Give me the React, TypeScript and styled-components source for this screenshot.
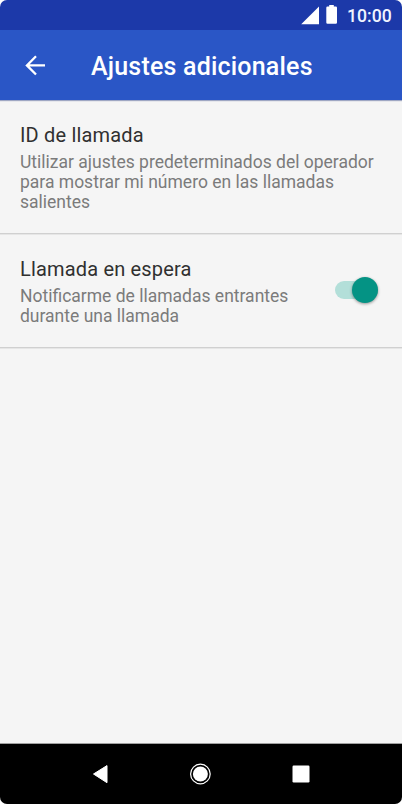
import React from "react";
import styled, { createGlobalStyle } from "styled-components";

const GlobalStyle = createGlobalStyle`
  * { box-sizing: border-box; }
  html, body { margin: 0; padding: 0; background: #fff; }
  body { font-family: Roboto, "Liberation Sans", sans-serif; }
`;

const Screen = styled.div`
  width: 402px;
  height: 804px;
  display: flex;
  flex-direction: column;
  overflow: hidden;
  border-radius: 7px;
  background: #f5f5f5;
`;

const StatusBar = styled.div`
  height: 30px;
  flex: none;
  display: flex;
  justify-content: flex-end;
  background: #1c39a9;
  color: #fff;
`;

const StatusIcons = styled.svg`
  display: block;
  width: 45px;
  height: 30px;
  flex: none;
`;

const Clock = styled.span`
  width: 57px;
  padding-left: 2px;
  font-size: 17.6px;
  font-weight: 500;
  line-height: 32px;
  color: #f0f4ff;
`;

const AppBar = styled.header`
  height: 70px;
  flex: none;
  display: flex;
  align-items: center;
  padding-left: 20px;
  background: #2a56c6;
  box-shadow: 0 1px 1px rgba(30, 50, 120, 0.4);
`;

const BackButton = styled.button`
  width: 30px;
  height: 30px;
  margin: 0 41px 0 0;
  padding: 0;
  border: 0;
  background: none;

  svg { display: block; }
`;

const Title = styled.h1`
  margin: 0;
  padding-top: 4px;
  font-size: 25px;
  letter-spacing: 0.2px;
  font-weight: 500;
  line-height: 30px;
  white-space: nowrap;
  color: #fff;
`;

const Content = styled.main`
  flex: 1;
`;

const Row = styled.section<{ $height: number }>`
  height: ${({ $height }) => $height}px;
  display: flex;
  justify-content: space-between;
  padding: 24px 24px 0 20px;
  border-bottom: 1px solid #d0d0d0;
  box-shadow: 0 1px 0 #e6e6e6;
`;

const RowTitle = styled.h2`
  margin: 0 0 5px;
  font-size: 20px;
  letter-spacing: 0.17px;
  font-weight: 400;
  line-height: 23px;
  color: #303030;
`;

const RowText = styled.p`
  margin: 0;
  font-size: 17.5px;
  line-height: 20px;
  white-space: nowrap;
  color: #7b7b7b;
`;

const Toggle = styled.button`
  width: 43px;
  height: 26px;
  margin: 19px 0 0;
  padding: 4px 0;
  display: flex;
  align-items: center;
  border: 0;
  background: none;
`;

const Track = styled.span`
  width: 43px;
  height: 18px;
  display: flex;
  align-items: center;
  justify-content: flex-end;
  border-radius: 9px;
  background: #b3dfd9;
`;

const Thumb = styled.span`
  width: 26px;
  height: 26px;
  flex: none;
  border-radius: 50%;
  background: #049384;
  box-shadow: 0 1px 3px rgba(0, 0, 0, 0.4);
`;

const NavBar = styled.nav`
  height: 61px;
  flex: none;
  display: flex;
  align-items: center;
  justify-content: center;
  gap: 68px;
  padding-right: 2px;
  border-top: 1px solid #a0a0a0;
  background: #000;

  svg { display: block; }
`;

export default function App() {
  return (
    <>
      <GlobalStyle />
      <Screen>
        <StatusBar>
          <StatusIcons viewBox="0 0 45 30">
            <path d="M1.2 24.2 19 6.5V24.2Z" fill="#fff" />
            <path d="M29.2 5h4.600v1.500h2q1.200 0 1.200 1.200V22.600q0 1.200-1.200 1.200H27.500q-1.200 0-1.200-1.200V7.700q0-1.200 1.200-1.200h1.700Z" fill="#fff" />
          </StatusIcons>
          <Clock>10:00</Clock>
        </StatusBar>
        <AppBar>
          <BackButton aria-label="Atrás">
            <svg width="30" height="30" viewBox="0 0 30 30" fill="none" stroke="#fff" strokeWidth="2.3">
              <path d="M25 15.400H7.200M16 6.200 6.900 15.400 16 24.500" />
            </svg>
          </BackButton>
          <Title>Ajustes adicionales</Title>
        </AppBar>
        <Content>
          <Row $height={134}>
            <div>
              <RowTitle>ID de llamada</RowTitle>
              <RowText>
                Utilizar ajustes predeterminados del operador
                <br />
                para mostrar mi número en las llamadas
                <br />
                salientes
              </RowText>
            </div>
          </Row>
          <Row $height={114}>
            <div>
              <RowTitle>Llamada en espera</RowTitle>
              <RowText>
                Notificarme de llamadas entrantes
                <br />
                durante una llamada
              </RowText>
            </div>
            <Toggle role="switch" aria-checked="true" aria-label="Llamada en espera">
              <Track>
                <Thumb />
              </Track>
            </Toggle>
          </Row>
        </Content>
        <NavBar>
          <svg width="32" height="32" viewBox="0 0 32 32">
            <path d="M9.500 16 23 7.600V24.700Z" fill="#fff" stroke="#fff" strokeWidth="1" strokeLinejoin="round" />
          </svg>
          <svg width="32" height="32" viewBox="0 0 32 32">
            <circle cx="16.400" cy="16" r="9.800" fill="none" stroke="#fff" strokeWidth="1.200" />
            <circle cx="16.400" cy="16" r="7.500" fill="#fff" />
          </svg>
          <svg width="32" height="32" viewBox="0 0 32 32">
            <rect x="8.500" y="7.500" width="17" height="17" rx="1.200" fill="#fff" />
          </svg>
        </NavBar>
      </Screen>
    </>
  );
}
